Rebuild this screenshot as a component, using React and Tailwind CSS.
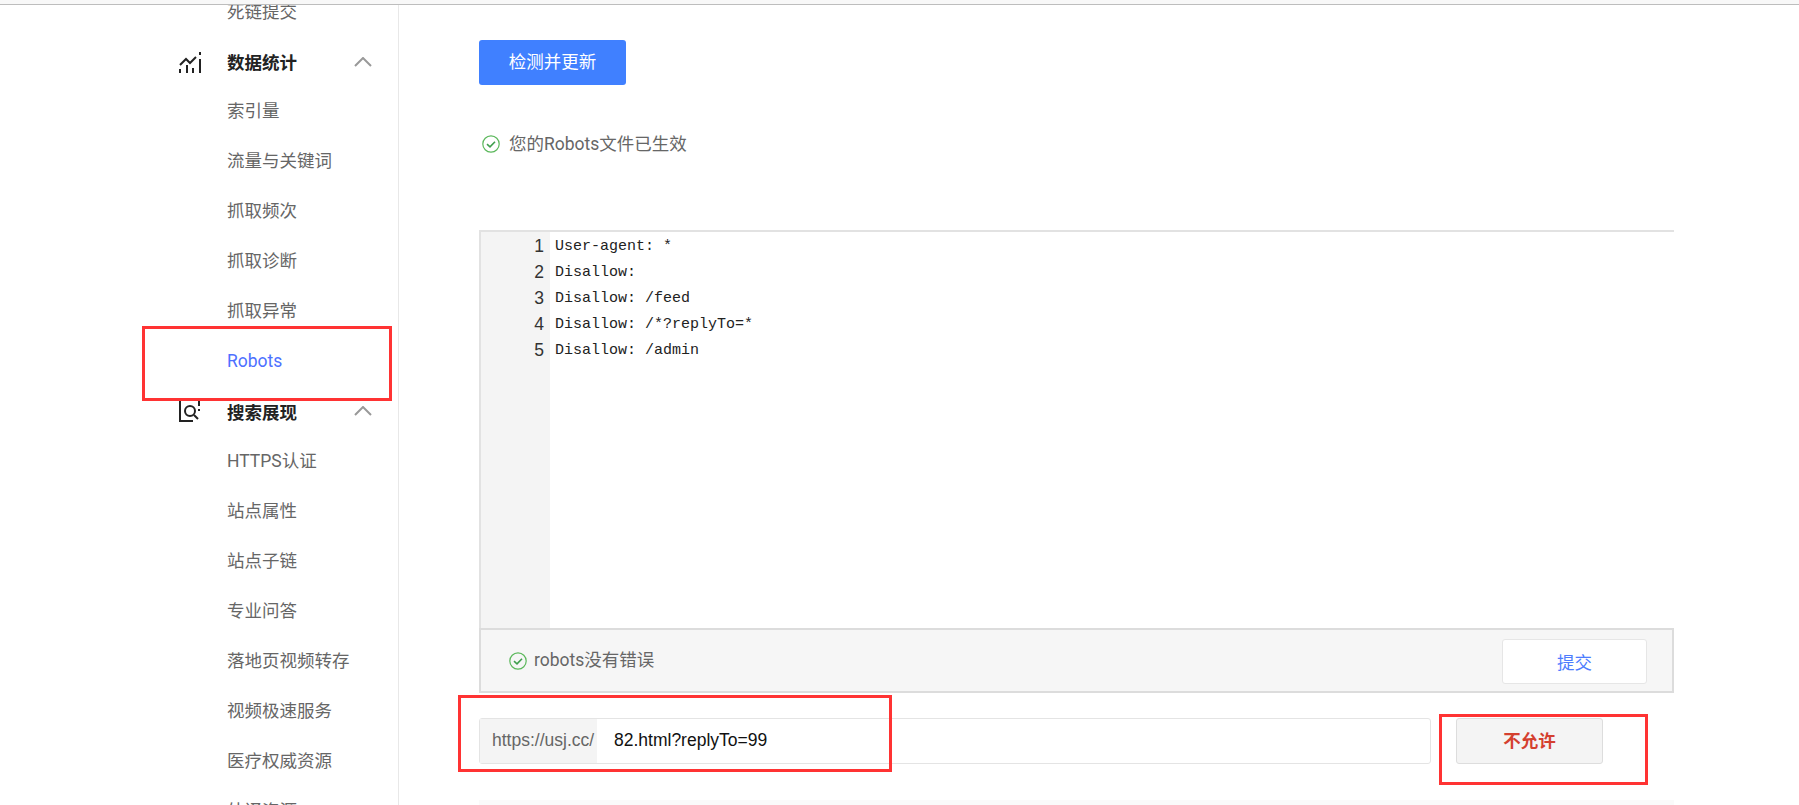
const sans = 'font-["Roboto","Noto_Sans_CJK_SC",sans-serif]'

const groups = [
  { items: ['死链提交'] },
  { title: '数据统计', icon: 'chart', items: ['索引量', '流量与关键词', '抓取频次', '抓取诊断', '抓取异常', 'Robots'] },
  { title: '搜索展现', icon: 'search', items: ['HTTPS认证', '站点属性', '站点子链', '专业问答', '落地页视频转存', '视频极速服务', '医疗权威资源', '外译资源'] },
]

const lines = ['User-agent: *', 'Disallow:', 'Disallow: /feed', 'Disallow: /*?replyTo=*', 'Disallow: /admin']

function ChartIcon() {
  return (
    <svg width="24" height="24" viewBox="0 0 24 24" fill="none" stroke="#222" strokeWidth="2">
      <path d="M2 15l6-6 4 4 6-6" strokeWidth="2" />
      <path d="M2 19v4M9 15v8M15 18v5M22 9v14" />
      <path d="M22 2v3" />
    </svg>
  )
}

function SearchIcon() {
  return (
    <svg width="24" height="24" viewBox="0 0 24 24" fill="none" stroke="#222" strokeWidth="2">
      <path d="M2 1v21h13" />
      <circle cx="12" cy="12" r="5" />
      <path d="M16 16l4 4M21 1v6M21 10v2" />
    </svg>
  )
}

function CheckIcon() {
  return (
    <svg width="18" height="18" viewBox="0 0 18 18" fill="none" className="shrink-0">
      <circle cx="9" cy="9" r="8.2" stroke="#5cb85c" strokeWidth="1.2" />
      <path d="M5 9.2l3 2.6 5-5" stroke="#3f9e4d" strokeWidth="1.6" />
    </svg>
  )
}

function Chevron() {
  return (
    <svg width="18" height="10" viewBox="0 0 18 10" fill="none" stroke="#999" strokeWidth="2" className="ml-auto mr-[26px]">
      <path d="M1 9l8-8 8 8" />
    </svg>
  )
}

function Sidebar() {
  return (
    <div className="w-[399px] shrink-0 border-r border-[#e8e8e8] h-full overflow-hidden">
      <div className="-mt-[18px]">
        {groups.map((g, i) => (
          <div key={i}>
            {g.title && (
              <div className={`flex items-center text-[#222] font-bold ${g.icon === 'search' ? 'h-[50px]' : 'h-[49px]'}`}>
                <div className="w-[202px] shrink-0 flex justify-end">{g.icon === 'chart' ? <ChartIcon /> : <SearchIcon />}</div>
                <span className="ml-[25px] pt-[4px]">{g.title}</span>
                <Chevron />
              </div>
            )}
            {g.items.map(t => (
              <div key={t} className={`h-[50px] flex items-center pl-[227px] ${t === 'Robots' ? 'text-[#4d70ff]' : 'text-[#666]'}`}>{t}</div>
            ))}
          </div>
        ))}
      </div>
    </div>
  )
}

function Editor() {
  return (
    <div className="mt-[74px] w-[1195px] h-[398px] border-t-2 border-l-2 border-[#e2e2e2] flex">
      <div className="w-[69px] bg-[#f4f4f4] pr-[6px] text-right font-['Liberation_Sans',sans-serif] text-[#333] pt-[1px]">
        {lines.map((_, i) => <div key={i} className="h-[26px] leading-[26px]">{i + 1}</div>)}
      </div>
      <div className="pl-[5px] pt-[2px] font-['Liberation_Mono',monospace] text-[15px] text-[#222]">
        {lines.map(l => <div key={l} className="h-[26px] leading-[26px] whitespace-pre">{l}</div>)}
      </div>
    </div>
  )
}

export default function App() {
  return (
    <div className={`relative w-[1799px] h-[805px] overflow-hidden bg-white text-[17.5px] ${sans}`}>
      <div className="h-[5px] bg-[#f8f8f8] border-b border-[#bdbdbd]"></div>
      <div className="flex h-[800px]">
        <Sidebar />
        <div className="pl-[80px] pt-[35px] flex-1">
          <button className="w-[147px] h-[45px] bg-[#4080ff] text-white rounded-[3px]">检测并更新</button>
          <div className="mt-[47px] flex items-center gap-[9px] pl-[3px] h-[24px] text-[#666]">
            <CheckIcon />
            <span>您的Robots文件已生效</span>
          </div>
          <Editor />
          <div className="w-[1195px] h-[65px] bg-[#f6f6f6] border-2 border-[#dcdcdc] flex items-center pl-[28px] pr-[25px] text-[#666]">
            <CheckIcon />
            <span className="ml-[7px]">robots没有错误</span>
            <button className="ml-auto w-[145px] h-[45px] mt-[2px] pt-[3px] bg-white border border-[#e6e6e6] rounded-[3px] text-[#4d7cfe]">提交</button>
          </div>
          <div className="mt-[25px] flex items-stretch h-[46px]">
            <div className="w-[952px] flex border border-[#e4e4e4] rounded-[3px]">
              <div className="w-[117px] bg-[#f4f4f4] flex items-center pl-[12px] pb-[2px] text-[#666] font-['Liberation_Sans',sans-serif]">https://usj.cc/</div>
              <div className="flex-1 flex items-center pl-[17px] pb-[2px] text-[#111] font-['Liberation_Sans',sans-serif]">82.html?replyTo=99</div>
            </div>
            <button className="ml-[25px] w-[147px] bg-[#f4f4f4] border border-[#dddddd] rounded-[3px] text-[#d4402f] font-bold">不允许</button>
          </div>
          <div className="mt-[36px] w-[1195px] h-[10px] bg-[#fafafa]"></div>
        </div>
      </div>
      {/* red annotation boxes on top of the screenshot */}
      <div className="absolute left-[142px] top-[326px] w-[250px] h-[75px] border-[3px] border-[#ff3333]"></div>
      <div className="absolute left-[458px] top-[695px] w-[434px] h-[77px] border-[3px] border-[#ff3333]"></div>
      <div className="absolute left-[1439px] top-[714px] w-[209px] h-[71px] border-[3px] border-[#ff3333]"></div>
    </div>
  )
}
